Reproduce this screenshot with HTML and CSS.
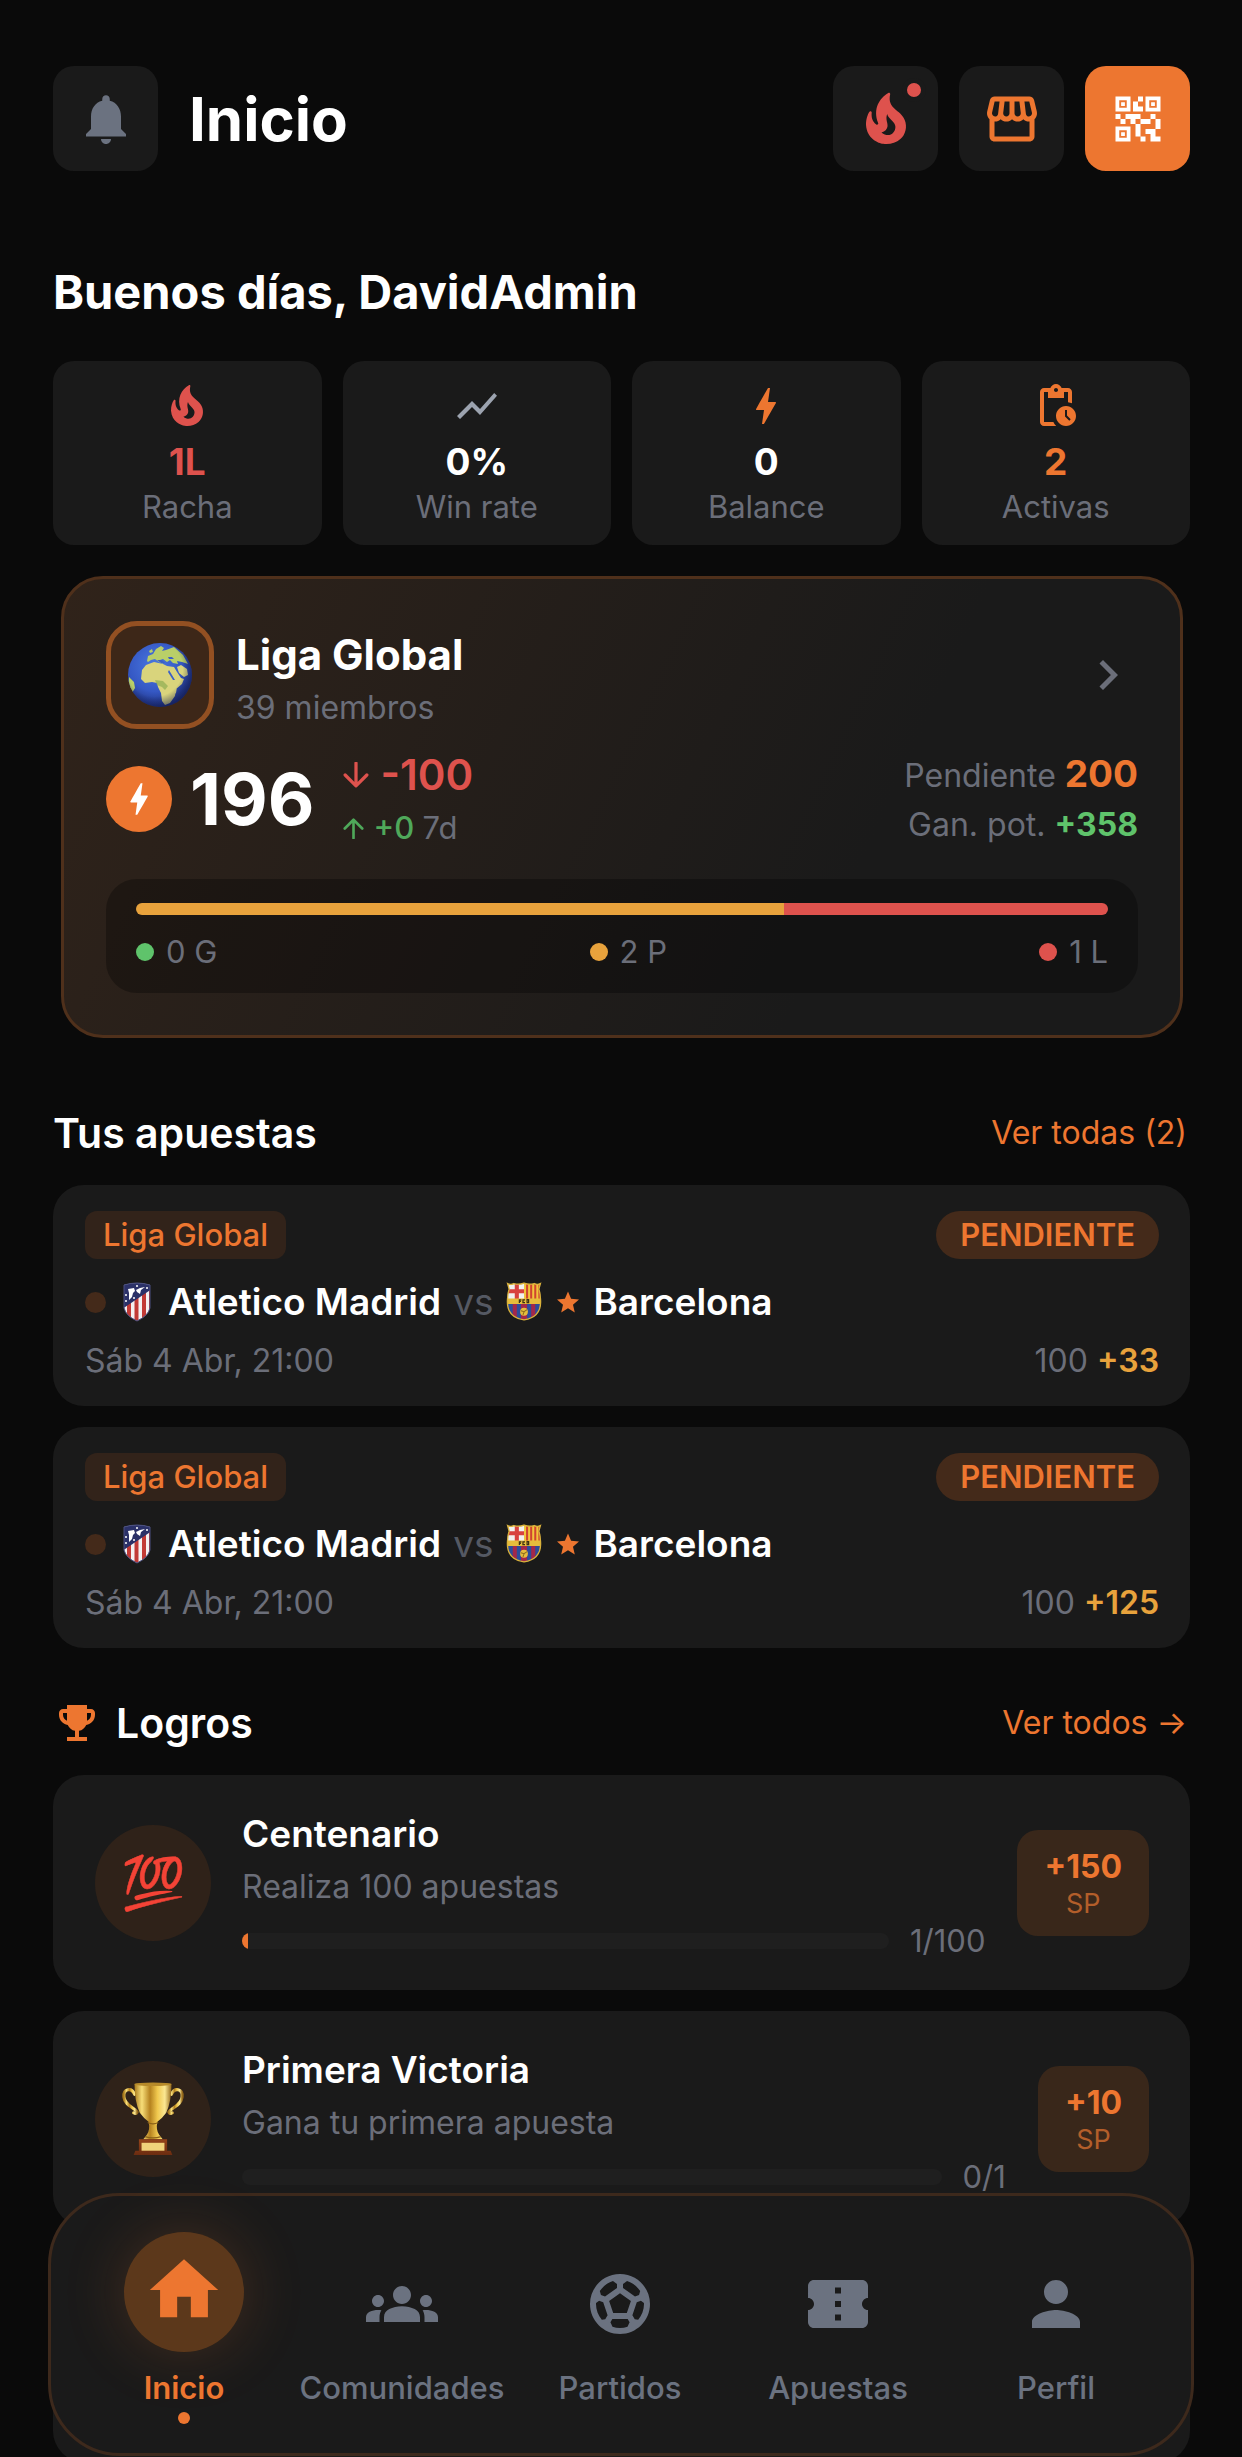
FILE: index.html
```html
<!DOCTYPE html>
<html lang="es">
<head>
<meta charset="utf-8">
<meta name="viewport" content="width=device-width, initial-scale=1">
<title>Inicio</title>
<link rel="stylesheet" href="styles.css">
</head>
<body>
<svg class="sprite" aria-hidden="true">
  <defs>
    <linearGradient id="gold" x1="0" x2="1" y1="0" y2="0">
      <stop offset="0" stop-color="#a87a1c"/><stop offset=".2" stop-color="#f7dd78"/><stop offset=".42" stop-color="#b5821f"/><stop offset=".62" stop-color="#f0c84e"/><stop offset=".82" stop-color="#fbe792"/><stop offset="1" stop-color="#94681a"/>
    </linearGradient>
    <linearGradient id="wood" x1="0" x2="0" y1="0" y2="1">
      <stop offset="0" stop-color="#94431a"/><stop offset="1" stop-color="#6b2c10"/>
    </linearGradient>
    <radialGradient id="sea" cx=".42" cy=".35" r=".68">
      <stop offset="0" stop-color="#4a78e0"/><stop offset=".6" stop-color="#3558c4"/><stop offset="1" stop-color="#1c2c74"/>
    </radialGradient>
    <radialGradient id="shade" cx=".42" cy=".4" r=".62">
      <stop offset=".7" stop-color="#101a50" stop-opacity="0"/><stop offset="1" stop-color="#101a50" stop-opacity=".6"/>
    </radialGradient>
    <clipPath id="disc"><circle cx="32" cy="32" r="32"/></clipPath>
    <clipPath id="atm-shield"><path d="M2 3Q15-1 28 3V26Q26 34 15 39Q4 34 2 26Z"/></clipPath>
    <clipPath id="fcb-shield"><path d="M2 1.500Q5 3 8 1.500Q13 3 18 1Q23 3 28 1.500Q31 3 34 1.500L32.500 7Q34 11 34 16Q36 34 18 37Q0 34 2 16Q2 11 3.500 7Z"/></clipPath>
  </defs>
  <symbol id="i-fire" viewBox="0 0 24 24"><path d="M19.48 12.350c-1.570-4.080-7.160-4.300-5.810-10.230.1-.44-.37-.78-.75-.55C9.290 3.710 6.680 8 8.870 13.620c.18.46-.36.89-.75.59-1.810-1.370-2-3.340-1.840-4.750.06-.52-.62-.77-.91-.34C4.690 10.160 4 11.840 4 14.370c.38 5.600 5.110 7.320 6.810 7.540 2.430.31 5.060-.14 6.950-1.870 2.080-1.930 2.840-5.010 1.720-7.690zm-9.280 5.030c1.440-.35 2.180-1.390 2.380-2.310.33-1.430-.96-2.830-.09-5.090.33 1.870 3.270 3.040 3.270 5.080.08 2.530-2.660 4.700-5.560 2.320z"/></symbol>
  <symbol id="i-bolt" viewBox="0 0 24 24"><path d="M11 21h-1l1-7H7.500c-.58 0-.57-.32-.38-.66.19-.34.05-.08.07-.12C8.480 10.940 10.420 7.540 13 3h1l-1 7h3.500c.49 0 .56.33.47.51l-.07.15C12.960 17.550 11 21 11 21z"/></symbol>
  <symbol id="crest-atm" viewBox="0 0 30 40">
    <g clip-path="url(#atm-shield)">
      <path fill="#f4f0f1" d="M0 0h30v40H0z"/>
      <path fill="#c23a36" d="M5 18h4v22H5zM12.500 12h4v28h-4zM20 8h4v32h-4zM27 4h3v36h-3z"/>
      <path fill="#2b3168" d="M0 0h30v7L0 27z"/>
      <path fill="#fff" d="M6 7l6-1 1 3-2 2-1 4-3 3V11zM14 8l4-2 5-1-4 3-1 4-3-2z"/>
      <g fill="#fff"><circle cx="4" cy="13" r="1"/><circle cx="4" cy="19" r="1"/><circle cx="15" cy="4" r="1"/><circle cx="25" cy="6" r="1"/><circle cx="12" cy="16" r="1"/></g>
    </g>
    <path d="M2 3Q15-1 28 3V26Q26 34 15 39Q4 34 2 26Z" fill="none" stroke="#4a4f80"/>
  </symbol>
  <symbol id="crest-fcb" viewBox="0 0 36 39">
    <g clip-path="url(#fcb-shield)">
      <path fill="#2c4d9b" d="M0 0h36v39H0z"/>
      <path fill="#f1f1ef" d="M0 0h18v17H0z"/><path fill="#d8423f" d="M9 0h4v17H9zM2 7h16v4H2z"/>
      <path fill="#f1c53c" d="M18 0h18v17H18z"/><path fill="#cf4430" d="M20 0h2v17h-2zM24 0h2v17h-2zM28 0h2v17h-2zM32 0h2v17h-2z"/>
      <path fill="#a3284a" d="M7 21h4v18H7zM15 21h6v18h-6zM25 21h4v18h-4z"/>
      <path fill="#e6bd3c" d="M0 16h36v5.500H0z"/>
      <path fill="none" stroke="#3b2f14" stroke-width="1.200" d="M13.500 20.500v-3h2M13.500 19h1.500M19 17.500h-2v2.500h2M21 17.200v3h1.500v-3z"/>
      <circle cx="18" cy="29" r="3.800" fill="#e6bd3c"/><path stroke="#8d6c1c" fill="none" d="M15 28l3 1 3-2M17 32l1-3"/>
    </g>
    <path d="M2 1.500Q5 3 8 1.500Q13 3 18 1Q23 3 28 1.500Q31 3 34 1.500L32.500 7Q34 11 34 16Q36 34 18 37Q0 34 2 16Q2 11 3.500 7Z" fill="none" stroke="#d9b13a" stroke-width="1.300"/>
  </symbol>
  <symbol id="i-star" viewBox="2 2 20 19"><path d="M12 17.270L18.180 21l-1.640-7.030L22 9.240l-7.190-.61L12 2 9.190 8.630 2 9.240l5.460 4.730L5.820 21z"/></symbol>
</svg>

<div class="app">
  <header class="topbar">
    <button class="square muted" type="button" aria-label="Notificaciones"><svg class="icon-l" viewBox="0 0 24 24"><path d="M12 22c1.100 0 2-.9 2-2h-4c0 1.100.89 2 2 2zm6-6v-5c0-3.070-1.640-5.640-4.500-6.320V4c0-.83-.67-1.500-1.500-1.500s-1.500.67-1.500 1.500v.68C7.630 5.360 6 7.920 6 11v5l-2 2v1h16v-1l-2-2z"/></svg></button>
    <h1>Inicio</h1>
    <button class="square red" type="button" aria-label="Racha"><svg class="icon-l"><use href="#i-fire"/></svg><span class="alert-dot"></span></button>
    <button class="square orange" type="button" aria-label="Tienda"><svg class="icon-l" viewBox="0 0 24 24"><path d="M21.900 8.890l-1.050-4.370c-.22-.9-1-1.520-1.910-1.520H5.050c-.9 0-1.690.63-1.900 1.520L2.100 8.890c-.24 1.020-.02 2.060.62 2.880.08.11.19.19.28.29V19c0 1.100.9 2 2 2h14c1.100 0 2-.9 2-2v-6.940c.09-.09.2-.18.28-.28.64-.82.87-1.870.62-2.890zm-2.990-3.900l1.050 4.370c.1.42.01.84-.25 1.170-.14.18-.44.47-.94.47-.61 0-1.140-.49-1.210-1.140L16.980 5l1.930-.01zM13 5h1.960l.54 4.520c.05.39-.07.78-.33 1.070-.22.26-.54.41-.95.41-.67 0-1.220-.59-1.220-1.310V5zM8.490 9.520L9.040 5H11v4.690c0 .72-.55 1.310-1.290 1.310-.34 0-.65-.15-.89-.41-.25-.29-.37-.68-.33-1.070zm-4.450-.16L5.050 5h1.970l-.58 4.860c-.08.65-.6 1.140-1.210 1.140-.49 0-.8-.29-.93-.47-.27-.32-.36-.75-.26-1.170zM5 19v-6.030c.08.01.15.03.23.03.87 0 1.660-.36 2.240-.95.6.6 1.400.95 2.310.95.87 0 1.650-.36 2.230-.93.59.57 1.390.93 2.290.93.84 0 1.640-.35 2.240-.95.58.59 1.370.95 2.240.95.08 0 .15-.02.23-.03V19H5z"/></svg></button>
    <button class="square solid" type="button" aria-label="Código QR"><svg class="icon-l" viewBox="0 0 24 24"><path d="M15 21h-2v-2h2v2zm-2-7h-2v5h2v-5zm8-2h-2v4h2v-4zm-2-2h-2v2h2v-2zM7 12H5v2h2v-2zm-2-2H3v2h2v-2zm7-5h2V3h-2v2zm-7.500-.5v3h3v-3h-3zM9 9H3V3h6v6zm-4.500 7.500v3h3v-3h-3zM9 21H3v-6h6v6zm7.500-16.500v3h3v-3h-3zM21 9h-6V3h6v6zm-2 10v-3h-4v2h2v3h4v-2h-2zm-2-7h-4v2h4v-2zm-4-2H7v2h2v2h2v-2h2v-2zm1-1V7h-2V5h-2v4h4zM6.750 5.250h-1.500v1.500h1.500v-1.500zm0 12h-1.500v1.500h1.500v-1.500zm12-12h-1.500v1.500h1.500v-1.500z"/></svg></button>
  </header>

  <main class="content">
    <h2 class="greeting">Buenos días, DavidAdmin</h2>

    <section class="stats">
      <div class="stat"><svg class="icon-m red"><use href="#i-fire"/></svg><strong class="red">1L</strong><span>Racha</span></div>
      <div class="stat"><svg class="icon-m grey" viewBox="0 0 24 24"><path d="M3.500 18.490l6-6.010 4 4L22 6.920l-1.410-1.410-7.090 7.970-4-4L2 16.990z"/></svg><strong>0%</strong><span>Win rate</span></div>
      <div class="stat"><svg class="icon-m orange"><use href="#i-bolt"/></svg><strong>0</strong><span>Balance</span></div>
      <div class="stat"><svg class="icon-m orange" viewBox="0 0 24 24"><path d="M17 12c-2.760 0-5 2.240-5 5s2.240 5 5 5 5-2.240 5-5-2.240-5-5-5zm1.650 7.350L16.500 17.200V14h1v2.790l1.850 1.850-.7.71zM18 3h-3.180C14.400 1.840 13.300 1 12 1s-2.400.84-2.820 2H6c-1.100 0-2 .9-2 2v15c0 1.100.9 2 2 2h6.110c-.59-.57-1.070-1.250-1.420-2H6V5h2v3h8V5h2v5.080c.71.1 1.380.31 2 .6V5c0-1.100-.9-2-2-2zm-6 2c-.55 0-1-.45-1-1s.45-1 1-1 1 .45 1 1-.45 1-1 1z"/></svg><strong class="orange">2</strong><span>Activas</span></div>
    </section>

    <section class="league">
      <div class="league-head">
        <div class="avatar"><svg class="globe" viewBox="0 0 64 64">
          <circle cx="32" cy="32" r="32" fill="url(#sea)"/>
          <g clip-path="url(#disc)">
            <path fill="#d9d47c" d="M14 27l4-5 8-3 9 2 4 2 7 1 3 5 4 6 3 1-2 5-6 5-1 7-5 7-5 2-3-4-1-8-3-6-1-4-5-1-7 1-4-4zM47 46l2-2-1 6-2 2zM49 24l4-2 6 4 1 6-4 2-5-4z"/>
            <path fill="#b9cf68" d="M19 18l1-5 5-2 3-5 5-3 3 2-2 3 4-1 8-3 9 8 5 9-6-2-5-1 1 3-5-1-3-3-3 2-4-3-3 1 3 4-4-2-4-3-4 1-3 2zM21 8l3-2 1 3-3 1zM1 34l5 5 1 6-3 5-4-7z"/>
            <path fill="#3a5fc8" d="M29 17l5 0 3 3-4 0zM40 14l4 0 2 2-5 0zM41 27l6 10-2 0-5-8z"/>
            <path fill="#8fae52" d="M27 37l8 1 5 5-3 4-3-3-5-2z" opacity=".7"/>
          </g>
          <circle cx="32" cy="32" r="32" fill="url(#shade)"/></svg></div>
        <div class="league-name"><h3>Liga Global</h3><p>39 miembros</p></div>
        <svg class="icon-l" viewBox="0 0 24 24"><path d="M10 6L8.590 7.410 13.170 12l-4.580 4.590L10 18l6-6z"/></svg>
      </div>
      <div class="league-score">
        <span class="coin"><svg><use href="#i-bolt"/></svg></span>
        <strong class="points">196</strong>
        <div class="trend">
          <p class="trend-main red"><svg class="arrow-l" viewBox="0 0 24 24"><path d="M12 1v21M2 12l10 10 10-10"/></svg>-100</p>
          <p class="trend-week green-dim"><svg class="arrow-s" viewBox="0 0 24 24"><path d="M12 23V2M2 12L12 2l10 10"/></svg><span>+0 <small>7d</small></span></p>
        </div>
        <div class="pending">
          <p class="pending-main">Pendiente <b class="orange">200</b></p>
          <p class="pending-sub">Gan. pot. <b class="green">+358</b></p>
        </div>
      </div>
      <div class="record">
        <div class="record-bar"><span class="bg-amber" style="width:66.670%"></span><span class="bg-red" style="width:33.330%"></span></div>
        <ul>
          <li><i class="bg-green"></i>0 G</li>
          <li><i class="bg-amber"></i>2 P</li>
          <li><i class="bg-red"></i>1 L</li>
        </ul>
      </div>
    </section>

    <section class="block">
      <div class="block-head"><h2>Tus apuestas</h2><a href="#apuestas">Ver todas (2)</a></div>
      <article class="bet">
        <div class="row"><span class="tag">Liga Global</span><span class="status">PENDIENTE</span></div>
        <div class="match"><i></i><svg class="crest"><use href="#crest-atm"/></svg><b>Atletico Madrid</b><span>vs</span><svg class="crest"><use href="#crest-fcb"/></svg><svg class="star"><use href="#i-star"/></svg><b>Barcelona</b></div>
        <div class="row meta"><span>Sáb 4 Abr, 21:00</span><span>100 <b>+33</b></span></div>
      </article>
      <article class="bet">
        <div class="row"><span class="tag">Liga Global</span><span class="status">PENDIENTE</span></div>
        <div class="match"><i></i><svg class="crest"><use href="#crest-atm"/></svg><b>Atletico Madrid</b><span>vs</span><svg class="crest"><use href="#crest-fcb"/></svg><svg class="star"><use href="#i-star"/></svg><b>Barcelona</b></div>
        <div class="row meta"><span>Sáb 4 Abr, 21:00</span><span>100 <b>+125</b></span></div>
      </article>
    </section>

    <section class="block achievements">
      <div class="block-head"><h2><svg class="icon-m orange" viewBox="0 0 24 24"><path d="M19 5h-2V3H7v2H5c-1.100 0-2 .9-2 2v1c0 2.550 1.920 4.630 4.390 4.940.63 1.500 1.980 2.630 3.610 2.960V19H7v2h10v-2h-4v-3.100c1.630-.33 2.980-1.460 3.610-2.960C19.080 12.630 21 10.550 21 8V7c0-1.100-.9-2-2-2zM5 8V7h2v3.820C5.840 10.400 5 9.300 5 8zm14 0c0 1.300-.84 2.400-2 2.820V7h2v1z"/></svg>Logros</h2><a href="#logros">Ver todos →</a></div>
      <article class="achievement">
        <div class="medal">💯</div>
        <div class="achievement-body">
          <h3>Centenario</h3><p>Realiza 100 apuestas</p>
          <div class="progress"><div class="track"><span style="width:1%"></span></div><span>1/100</span></div>
        </div>
        <div class="reward"><b>+150</b><span>SP</span></div>
      </article>
      <article class="achievement">
        <div class="medal"><svg class="cup" viewBox="0 0 70 84">
          <g fill="none" stroke="url(#gold)" stroke-width="3.500" stroke-linecap="round"><path d="M14 14C11 6 1 7 2 17C3 27 13 28 17 34M17 34q-1 3-4 1"/><path d="M56 14C59 6 69 7 68 17C67 27 57 28 53 34M53 34q1 3 4 1"/></g>
          <path fill="url(#gold)" d="M14 2H56Q56 22 50 35Q45 42 40 45Q38 54 42 60L46 65H24L28 60Q32 54 30 45Q25 42 20 35Q14 22 14 2Z"/>
          <ellipse cx="35" cy="2.500" rx="21" ry="2" fill="#b78a2a"/>
          <path d="M29 46q6 3 12 0M26 62q9 3 18 0" stroke="#8a6118" stroke-width="1.500" fill="none"/>
          <path fill="url(#wood)" d="M19 65H51V78H19zM15 78H55L57 83H13z"/><path fill="#f0d27a" d="M22 69H48V78H22z"/></svg></div>
        <div class="achievement-body">
          <h3>Primera Victoria</h3><p>Gana tu primera apuesta</p>
          <div class="progress"><div class="track"></div><span>0/1</span></div>
        </div>
        <div class="reward"><b>+10</b><span>SP</span></div>
      </article>
      <article class="achievement"></article>
    </section>
  </main>

  <nav class="tabbar">
    <a class="tab active" href="#inicio"><span class="tab-icon"><svg viewBox="0 0 24 24"><path d="M10 20v-6h4v6h5v-8h3L12 3 2 12h3v8z"/></svg></span><span>Inicio</span></a>
    <a class="tab" href="#comunidades"><span class="tab-icon"><svg viewBox="0 0 24 24"><path d="M12 12.750c1.630 0 3.070.39 4.240.9 1.080.48 1.760 1.560 1.760 2.730V18H6v-1.610c0-1.180.68-2.260 1.760-2.730 1.170-.52 2.610-.91 4.240-.91zM4 13c1.100 0 2-.9 2-2s-.9-2-2-2-2 .9-2 2 .9 2 2 2zm1.130 1.100c-.37-.06-.74-.1-1.130-.1-.99 0-1.930.21-2.780.58C.48 14.900 0 15.620 0 16.430V18h4.500v-1.610c0-.83.23-1.610.63-2.290zM20 13c1.100 0 2-.9 2-2s-.9-2-2-2-2 .9-2 2 .9 2 2 2zm4 3.430c0-.81-.48-1.530-1.220-1.850-.85-.37-1.790-.58-2.780-.58-.39 0-.76.04-1.130.1.4.68.63 1.460.63 2.290V18H24v-1.570zM12 6c1.660 0 3 1.340 3 3s-1.340 3-3 3-3-1.340-3-3 1.340-3 3-3z"/></svg></span><span>Comunidades</span></a>
    <a class="tab" href="#partidos"><span class="tab-icon"><svg viewBox="0 0 24 24"><path d="M12 2C6.480 2 2 6.480 2 12s4.480 10 10 10 10-4.480 10-10S17.520 2 12 2zm1 3.300l1.350-.95c1.820.56 3.370 1.760 4.380 3.340l-.39 1.340-1.350.46L13 6.700V5.300zm-3.350-.95L11 5.300v1.400L7.010 9.490l-1.350-.46-.39-1.340c1.010-1.570 2.560-2.770 4.380-3.340zM7.080 17.110l-1.140.1C4.730 15.810 4 13.990 4 12c0-.12.01-.23.02-.35l1-.73 1.380.48 1.460 4.340-.78 1.370zm7.420 2.480c-.79.26-1.630.41-2.500.41s-1.710-.15-2.500-.41l-.69-1.490.64-1.100h5.110l.64 1.110-.7 1.480zM14.270 15H9.730l-1.350-4.020L12 8.440l3.630 2.540L14.270 15zm3.790 2.210l-1.140-.1-.79-1.370 1.460-4.340 1.390-.47 1 .73c.01.11.02.22.02.34 0 1.990-.73 3.810-1.940 5.210z"/></svg></span><span>Partidos</span></a>
    <a class="tab" href="#apuestas"><span class="tab-icon"><svg viewBox="0 0 24 24"><path d="M22 10V6c0-1.110-.9-2-2-2H4c-1.100 0-1.990.89-1.990 2v4c1.100 0 1.990.9 1.990 2s-.89 2-2 2v4c0 1.100.9 2 2 2h16c1.100 0 2-.9 2-2v-4c-1.100 0-2-.9-2-2s.9-2 2-2zm-9 7.500h-2v-2h2v2zm0-4.500h-2v-2h2v2zm0-4.500h-2v-2h2v2z"/></svg></span><span>Apuestas</span></a>
    <a class="tab" href="#perfil"><span class="tab-icon"><svg viewBox="0 0 24 24"><path d="M12 12c2.210 0 4-1.790 4-4s-1.790-4-4-4-4 1.790-4 4 1.790 4 4 4zm0 2c-2.670 0-8 1.340-8 4v2h16v-2c0-2.660-5.330-4-8-4z"/></svg></span><span>Perfil</span></a>
  </nav>
</div>
</body>
</html>
```
FILE: styles.css
```css
:root {
  --bg: #0a0a0a;
  --card: #1a1a1a;
  --orange: #ed7630;
  --red: #de524d;
  --amber: #e8a23c;
  --green: #5fc36b;
  --muted: #6b6e79;
}

* { box-sizing: border-box; }

body {
  margin: 0;
  background: var(--bg);
  color: #fff;
  font-family: Inter, "Noto Sans", sans-serif;
  font-size: 32px;
  line-height: 36px;
}

h1, h2, h3, p, ul { margin: 0; padding: 0; }
ul { list-style: none; }
a { color: inherit; text-decoration: none; }
svg { display: block; fill: currentColor; flex: none; }

.sprite { position: absolute; width: 0; height: 0; }

.red { color: var(--red); }
.orange { color: var(--orange); }
.green { color: var(--green); }
.green-dim { color: #4fa85a; }
.muted { color: #6b7280; }
.grey { color: #9ca3af; }
.bg-red { background: var(--red); }
.bg-amber { background: var(--amber); }
.bg-green { background: var(--green); }

.icon-l { width: 60px; height: 60px; }
.icon-m { width: 48px; height: 48px; }

.app {
  position: relative;
  height: 100vh;
  overflow: hidden;
  padding: 0 52px 0 53px;
}

/* Top bar */
.topbar {
  display: flex;
  align-items: center;
  gap: 21px;
  padding-top: 66px;
}
.topbar h1 {
  flex: 1;
  margin-left: 10px;
  font-size: 60px;
  line-height: 72px;
  font-weight: 700;
}
.square {
  position: relative;
  display: grid;
  place-items: center;
  width: 105px;
  height: 105px;
  padding: 0;
  border: 0;
  border-radius: 21px;
  background: var(--card);
}
.square.solid { background: var(--orange); color: #fff; }
.alert-dot {
  position: absolute;
  top: 12px;
  right: 12px;
  width: 24px;
  height: 24px;
  border: 5px solid var(--card);
  border-radius: 50%;
  background: var(--red);
}

.greeting {
  margin: 93px 0 41px;
  font-size: 47px;
  line-height: 56px;
  font-weight: 700;
}

/* Stats */
.stats {
  display: grid;
  grid-template-columns: repeat(4, 1fr);
  gap: 21px;
}
.stat {
  display: flex;
  flex-direction: column;
  align-items: center;
  padding: 21px 0 20px;
  border-radius: 21px;
  background: var(--card);
}
.stat strong { margin: 10px 0 5px; font-size: 37px; line-height: 44px; }
.stat span { color: var(--muted); font-size: 31px; }

/* League card */
.league {
  margin: 31px 7px 0 8px;
  padding: 42px;
  border: 3px solid #4f301b;
  border-radius: 42px;
  background: linear-gradient(115deg, #30231a 0%, #1a1a1a 70%);
}
.league-head { display: flex; align-items: center; color: var(--muted); }
.avatar {
  display: grid;
  place-items: center;
  width: 108px;
  height: 108px;
  border: 5px solid #935022;
  border-radius: 31px;
  background: #3d2718;
}
.globe { width: 64px; height: 64px; }
.league-name { flex: 1; padding: 6px 0 0 22px; }
.league-name h3 { margin-bottom: 10px; color: #fff; font-size: 42px; line-height: 50px; font-weight: 700; }
.league-score { display: flex; align-items: center; margin-top: 21px; }
.coin {
  display: grid;
  place-items: center;
  width: 66px;
  height: 66px;
  border-radius: 50%;
  background: var(--orange);
}
.coin svg { width: 42px; height: 42px; }
.points { margin: 0 28px 0 18px; font-size: 72px; line-height: 80px; }
.arrow-l, .arrow-s { fill: none; stroke: currentColor; stroke-width: 3px; stroke-linecap: round; stroke-linejoin: round; }
.arrow-l { width: 26px; height: 26px; }
.arrow-s { width: 21px; height: 21px; }
.trend-main { display: flex; align-items: center; gap: 12px; margin-bottom: 8px; font-size: 42px; line-height: 50px; font-weight: 600; }
.trend-week { display: flex; align-items: center; gap: 10px; font-size: 31px; line-height: 40px; font-weight: 500; }
.trend-week small { color: var(--muted); font-size: 31px; font-weight: 400; }
.pending { margin-left: auto; color: var(--muted); text-align: right; line-height: 44px; }
.pending-main { margin-bottom: 5px; }
.pending-main b { font-size: 37px; }
.record {
  margin-top: 31px;
  padding: 24px 30px 23px;
  border-radius: 31px;
  background: rgba(0, 0, 0, .3);
}
.record-bar { display: flex; height: 12px; margin-bottom: 19px; overflow: hidden; border-radius: 6px; }
.record ul { display: flex; justify-content: space-between; color: var(--muted); font-size: 31px; }
.record li { display: flex; align-items: center; gap: 12px; }
.record i { width: 18px; height: 18px; border-radius: 50%; }

/* Sections */
.block { display: grid; gap: 21px; margin-top: 69px; }
.block-head {
  display: flex;
  align-items: center;
  justify-content: space-between;
  margin-bottom: 5px;
  padding-right: 3px;
  color: var(--orange);
}
.block-head h2 { display: flex; align-items: center; gap: 15px; color: #fff; font-size: 41px; line-height: 52px; font-weight: 600; }

/* Bets */
.bet { padding: 26px 31px 25px 32px; border-radius: 31px; background: var(--card); }
.row { display: flex; align-items: center; justify-content: space-between; }
.tag, .status { padding: 0 18px; border-radius: 12px; background: #32231a; color: var(--orange); font-size: 31px; line-height: 48px; font-weight: 500; }
.status { padding: 0 24px; border-radius: 24px; background: #442a1a; font-weight: 600; }
.match { display: flex; align-items: center; gap: 12px; margin: 21px 0 17px; font-size: 37px; line-height: 44px; }
.match b { font-weight: 600; }
.match span { color: #555963; }
.match i { width: 21px; height: 21px; border-radius: 50%; background: #442a1a; }
.crest { width: 38px; height: 40px; }
.star { width: 22px; height: 22px; margin: 0 2px; color: var(--orange); }
.meta { color: var(--muted); line-height: 40px; }
.meta b { color: var(--amber); font-weight: 600; }

/* Achievements */
.achievements { margin-top: 49px; }
.achievement {
  display: flex;
  align-items: center;
  min-height: 215px;
  padding: 0 41px 0 42px;
  border-radius: 31px;
  background: var(--card);
}
.medal {
  display: grid;
  place-items: center;
  width: 116px;
  height: 116px;
  border-radius: 50%;
  background: #2f2219;
  font-size: 52px;
  line-height: 64px;
}
.cup { width: 70px; height: 74px; }
.achievement-body { flex: 1; padding: 5px 32px 0 31px; color: var(--muted); }
.achievement-body h3 { margin-bottom: 13px; color: #fff; font-size: 37px; line-height: 44px; font-weight: 600; }
.progress { display: flex; align-items: center; gap: 21px; margin-top: 18px; font-size: 31px; }
.track { flex: 1; height: 16px; overflow: hidden; border-radius: 8px; background: #1f1f1f; }
.track span { display: block; height: 16px; background: var(--orange); }
.reward {
  display: grid;
  justify-items: center;
  padding: 17px 27px 15px;
  border-radius: 21px;
  background: #39271a;
  color: #b35e2a;
  font-size: 27px;
  line-height: 34px;
}
.reward b { color: var(--orange); font-size: 32px; line-height: 40px; }

.tabbar {
  position: absolute;
  right: 48px;
  bottom: 1px;
  left: 48px;
  display: grid;
  grid-template-columns: repeat(5, 1fr);
  padding: 36px 26px 29px 24px;
  border: 3px solid #3d291c;
  border-radius: 72px;
  background: #1a1a1a;
}
.tab { display: flex; flex-direction: column; align-items: center; padding-bottom: 18px; color: #6b7280; font-size: 31px; font-weight: 500; }
.tab-icon { display: grid; place-items: center; width: 120px; height: 120px; margin-bottom: 18px; padding-top: 24px; border-radius: 50%; }
.tab-icon svg { width: 72px; height: 72px; }
.active { padding-bottom: 0; color: var(--orange); font-weight: 600; }
.active .tab-icon { padding: 0 0 4px; background: #5c381b; box-shadow: 0 0 64px rgba(237, 119, 48, .2); }
.active .tab-icon svg { width: 82px; height: 82px; }
.active::after { content: ""; width: 12px; height: 12px; margin-top: 6px; border-radius: 50%; background: var(--orange); }
```
